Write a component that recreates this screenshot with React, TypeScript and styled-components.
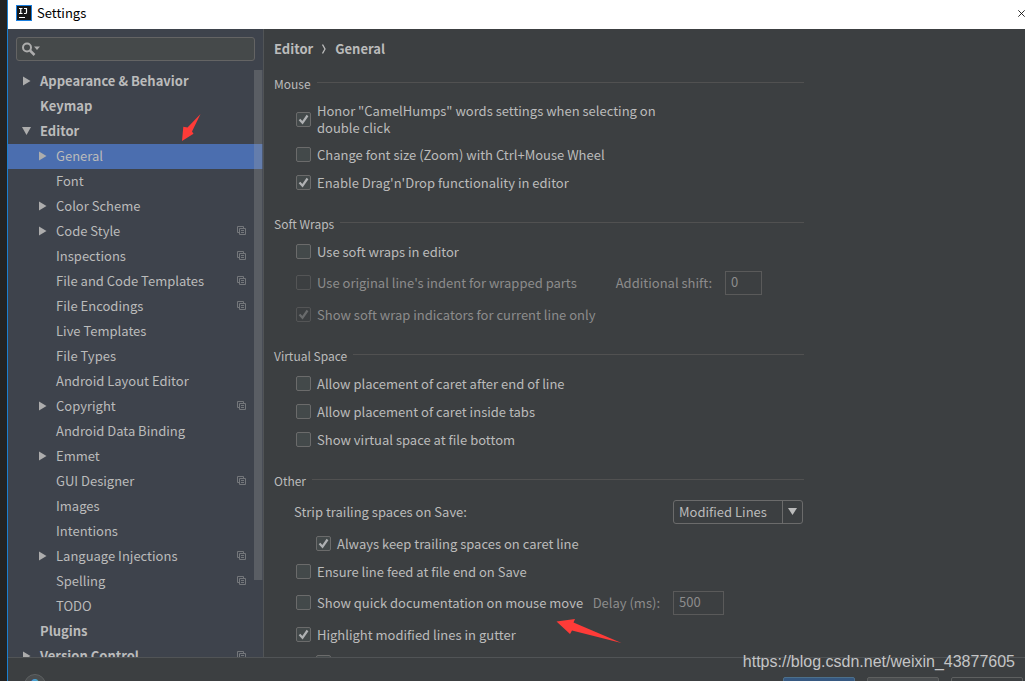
import React from "react";
import styled, { createGlobalStyle, css } from "styled-components";

const GlobalStyle = createGlobalStyle`
  *, *::before, *::after { box-sizing: border-box; }
  body { margin: 0; background: #232323; }
  body, button, input, select {
    font-family: "Noto Sans CJK SC", "Noto Sans", sans-serif;
    font-size: 13px;
  }
`;

const Desktop = styled.div`
  position: relative;
  display: flex;
  height: 100vh;
  padding-left: 7px;
  overflow: hidden;
  background: #232323;
`;

const SettingsWindow = styled.div`
  display: flex;
  flex: 1;
  flex-direction: column;
  min-width: 0;
  border-left: 1px solid #1b7fd0;
  background: #3c3f41;
  color: #bbbbbb;
`;

const TitleBar = styled.header`
  display: flex;
  flex: none;
  align-items: center;
  gap: 5px;
  height: 29px;
  padding: 0 0 3px 8px;
  overflow: hidden;
  background: #ffffff;
  color: #000000;
`;

const WindowTitle = styled.h1`
  flex: 1;
  margin: 0;
  font-size: 13px;
  font-weight: 400;
  line-height: 20px;
`;

const CloseButton = styled.button`
  display: flex;
  flex: none;
  width: 7px;
  padding: 0;
  overflow: hidden;
  border: 0;
  background: none;
`;

const Body = styled.div`
  display: flex;
  flex: 1;
  min-height: 0;
`;

const Sidebar = styled.aside`
  position: relative;
  display: flex;
  flex: none;
  flex-direction: column;
  width: 256px;
  overflow: hidden;
  border-right: 1px solid #515456;
  background: #3e434c;
`;

const SearchBox = styled.label`
  display: flex;
  flex: none;
  align-items: center;
  height: 24px;
  margin: 8px;
  padding: 0 5px;
  border: 1px solid #646464;
  border-radius: 3px;
  background: #45494a;
`;

const SearchInput = styled.input`
  flex: 1;
  min-width: 0;
  padding: 0 4px;
  border: 0;
  outline: 0;
  background: none;
  color: #bbbbbb;
`;

const Tree = styled.ul`
  margin: 0;
  padding: 0;
  list-style: none;
`;

const TreeRow = styled.li<{ $level: number; $selected?: boolean }>`
  display: flex;
  align-items: center;
  height: 25px;
  padding: 0 16px 2px ${(p) => (p.$level ? 30 : 14)}px;
  background: ${(p) => (p.$selected ? "#4b6eaf" : "transparent")};
  font-weight: ${(p) => (p.$level ? 400 : 700)};
`;

const Twisty = styled.span`
  display: flex;
  flex: none;
  width: 18px;
`;

const TreeLabel = styled.span`
  flex: 1;
  line-height: 20px;
  white-space: nowrap;
`;

const ScrollThumb = styled.div`
  position: absolute;
  top: 41px;
  right: 0;
  width: 9px;
  height: 510px;
  border-right: 1px solid rgba(62, 67, 76, 0.6);
  background: rgba(166, 166, 166, 0.28);
`;

const Page = styled.main`
  flex: 1;
  min-width: 0;
  padding: 10px;
  overflow: hidden;
`;

const Breadcrumb = styled.nav`
  display: flex;
  align-items: center;
  gap: 9px;
  margin-bottom: 15px;
  font-weight: 700;
  line-height: 20px;
`;

const Section = styled.section`
  display: flex;
  flex-direction: column;
  gap: 7px;
  max-width: 530px;
  margin-bottom: 21px;
`;

const SectionTitle = styled.h2`
  display: flex;
  gap: 6px;
  margin: 0;
  font-size: 12px;
  font-weight: 400;
  line-height: 20px;

  &::after {
    content: "";
    flex: 1;
    height: 9px;
    border-bottom: 1px solid #515151;
  }
`;

const rowHeights = { normal: 21, tall: 28, double: 36 };

const OptionRow = styled.div<{ $size?: keyof typeof rowHeights; $indent?: number }>`
  display: flex;
  flex: none;
  align-items: center;
  height: ${(p) => rowHeights[p.$size ?? "normal"]}px;
  padding-bottom: ${(p) => (p.$size === "tall" ? 1 : 0)}px;
  padding-left: ${(p) => p.$indent ?? 22}px;
`;

const disabledText = css`
  color: #8c8c8c;
`;

const OptionLabel = styled.label<{ $disabled?: boolean }>`
  display: flex;
  align-items: center;
  gap: 6px;
  max-width: 360px;
  line-height: 17px;
  ${(p) => p.$disabled && disabledText}
`;

const TickFrame = styled.span`
  display: grid;
  flex: none;
  width: 15px;
  height: 15px;

  > * {
    grid-area: 1 / 1;
  }
`;

const Tick = styled.input`
  width: 15px;
  height: 15px;
  margin: 0;
  appearance: none;
  border: 1px solid #6b6b6b;
  border-radius: 2px;
  background: #43494a;

  &:disabled {
    border-color: #545556;
    background: #3c3f41;
  }

  & + svg {
    display: none;
    pointer-events: none;
    color: #afb1b3;
  }

  &:checked + svg {
    display: block;
  }

  &:disabled + svg {
    color: #696b6c;
  }
`;

const Field = styled.label<{ $end?: number; $disabled?: boolean }>`
  display: flex;
  align-items: center;
  gap: 13px;
  margin-left: auto;
  padding-right: ${(p) => p.$end ?? 0}px;
  line-height: 17px;
  ${(p) => p.$disabled && disabledText}
`;

const NumberBox = styled.input<{ $width: number }>`
  width: ${(p) => p.$width}px;
  height: 24px;
  padding: 0 5px 2px;
  border: 1px solid #5a5a5a;
  background: #3c3f41;
  color: #8c8c8c;
`;

const SelectFrame = styled.span`
  display: grid;
  width: 130px;
  height: 24px;
  margin: 0 1px 0 auto;
  border: 1px solid #6b6b6b;
  border-radius: 3px;

  > * {
    grid-area: 1 / 1;
  }
`;

const Select = styled.select`
  padding: 0 24px 1px 5px;
  appearance: none;
  border: 0;
  background: none;
  color: #bbbbbb;
`;

const SelectArrow = styled.span`
  display: grid;
  place-items: center;
  justify-self: end;
  width: 20px;
  border-left: 1px solid #6b6b6b;
  pointer-events: none;
`;

const Footer = styled.footer`
  display: flex;
  flex: none;
  align-items: flex-start;
  gap: 12px;
  height: 24px;
  padding: 16px 2px 0 16px;
  overflow: hidden;
  border-top: 1px solid #515456;
`;

const HelpButton = styled.button`
  flex: none;
  width: 22px;
  height: 22px;
  margin-right: auto;
  padding: 0;
  border: 1px solid #5e6162;
  border-radius: 50%;
  background: #4a4d4f;
  color: #49a0cf;
  font-size: 16px;
  font-weight: 700;
  line-height: 16px;
`;

const DialogButton = styled.button<{ $kind?: "primary" | "disabled" }>`
  flex: none;
  width: 72px;
  height: 24px;
  margin-top: 3px;
  border: 1px solid ${(p) => (p.$kind === "primary" ? "#4c708c" : "#5e6060")};
  border-radius: 2px;
  background: ${(p) =>
    p.$kind === "primary" ? "#365880" : p.$kind === "disabled" ? "#4a4d4f" : "#3c3f41"};
  color: #bbbbbb;
`;

const Watermark = styled.div`
  position: absolute;
  right: 10px;
  bottom: 9px;
  color: #c4c5c6;
  font-family: "Liberation Sans", Arial, sans-serif;
  font-size: 16px;
  line-height: 20px;
`;

const Annotation = styled.svg<{ $x: number; $y: number }>`
  position: absolute;
  top: ${(p) => p.$y}px;
  left: ${(p) => p.$x}px;
  fill: #fe3b38;
  pointer-events: none;
`;

const RightArrow = () => (
  <svg width="9" height="10" viewBox="0 0 9 10" fill="#adadad" aria-hidden="true">
    <path d="M1 .5L8.500 5L1 9.500Z" />
  </svg>
);

const DownArrow = () => (
  <svg width="9" height="9" viewBox="0 0 9 9" fill="#adadad" aria-hidden="true">
    <path d="M0 1H9L4.500 9Z" />
  </svg>
);

const CopyIcon = () => (
  <svg width="10" height="10" viewBox="0 0 10 10" fill="none" stroke="#74777b" aria-hidden="true">
    <path d="M2 6.500H.5V.5H6.500V2M2.500 2.500H8.500V8.500H2.500ZM4 4.500H7M4 6.500H7" />
  </svg>
);

const SearchIcon = () => (
  <svg width="19" height="14" viewBox="0 0 19 14" fill="none" aria-hidden="true">
    <circle cx="5" cy="5.500" r="4" stroke="#adadad" strokeWidth="2" />
    <path d="M8 8.500L12.500 13" stroke="#adadad" strokeWidth="2.500" />
    <path d="M12 4.500H18L15 8Z" fill="#adadad" />
  </svg>
);

const CheckMark = () => (
  <svg width="15" height="15" viewBox="0 0 15 15" fill="none" aria-hidden="true">
    <path d="M3.500 7.500L6.500 10.700L11.500 3.500" stroke="currentColor" strokeWidth="2.200" />
  </svg>
);

const AppIcon = () => (
  <svg width="16" height="16" viewBox="0 0 16 16" fill="none" aria-hidden="true">
    <path d="M0 0H16V16H0Z" fill="#1a7fe0" />
    <path d="M1 1H15V15H1Z" fill="#161616" />
    <path d="M3 3.500H6.500M4.750 3.500V8.500M3 8.500H6.500M8 3.500H11M10.500 3.500V7.500Q10.500 8.500 9.500 8.500H8M3 12.500H9" stroke="#ffffff" strokeWidth="1.200" />
  </svg>
);

type Node = {
  name: string;
  level: number;
  state?: "open" | "closed";
  copy?: boolean;
  selected?: boolean;
};

const nodes: Node[] = [
  { name: "Appearance & Behavior", level: 0, state: "closed" },
  { name: "Keymap", level: 0 },
  { name: "Editor", level: 0, state: "open" },
  { name: "General", level: 1, state: "closed", selected: true },
  { name: "Font", level: 1 },
  { name: "Color Scheme", level: 1, state: "closed" },
  { name: "Code Style", level: 1, state: "closed", copy: true },
  { name: "Inspections", level: 1, copy: true },
  { name: "File and Code Templates", level: 1, copy: true },
  { name: "File Encodings", level: 1, copy: true },
  { name: "Live Templates", level: 1 },
  { name: "File Types", level: 1 },
  { name: "Android Layout Editor", level: 1 },
  { name: "Copyright", level: 1, state: "closed", copy: true },
  { name: "Android Data Binding", level: 1 },
  { name: "Emmet", level: 1, state: "closed" },
  { name: "GUI Designer", level: 1, copy: true },
  { name: "Images", level: 1 },
  { name: "Intentions", level: 1 },
  { name: "Language Injections", level: 1, state: "closed", copy: true },
  { name: "Spelling", level: 1, copy: true },
  { name: "TODO", level: 1 },
  { name: "Plugins", level: 0 },
  { name: "Version Control", level: 0, state: "closed", copy: true },
];

type OptionProps = {
  label: React.ReactNode;
  checked?: boolean;
  disabled?: boolean;
  size?: keyof typeof rowHeights;
  indent?: number;
  children?: React.ReactNode;
};

const Option = ({ label, checked, disabled, size, indent, children }: OptionProps) => (
  <OptionRow $size={size} $indent={indent}>
    <OptionLabel $disabled={disabled}>
      <TickFrame>
        <Tick type="checkbox" defaultChecked={checked} disabled={disabled} />
        <CheckMark />
      </TickFrame>
      <span>{label}</span>
    </OptionLabel>
    {children}
  </OptionRow>
);

export default function App() {
  return (
    <Desktop>
      <GlobalStyle />
      <SettingsWindow>
        <TitleBar>
          <AppIcon />
          <WindowTitle>Settings</WindowTitle>
          <CloseButton aria-label="Close">
            <svg width="11" height="11" viewBox="0 0 11 11" fill="none" stroke="#000000">
              <path d="M.5 .5L10.500 10.500M10.500 .5L.5 10.500" strokeWidth="1.300" />
            </svg>
          </CloseButton>
        </TitleBar>
        <Body>
          <Sidebar>
            <SearchBox>
              <SearchIcon />
              <SearchInput type="text" aria-label="Search settings" />
            </SearchBox>
            <Tree>
              {nodes.map((n) => (
                <TreeRow key={n.name} $level={n.level} $selected={n.selected}>
                  <Twisty>
                    {n.state === "closed" && <RightArrow />}
                    {n.state === "open" && <DownArrow />}
                  </Twisty>
                  <TreeLabel>{n.name}</TreeLabel>
                  {n.copy && <CopyIcon />}
                </TreeRow>
              ))}
            </Tree>
            <ScrollThumb />
          </Sidebar>
          <Page>
            <Breadcrumb aria-label="Location">
              <span>Editor</span>
              <svg width="4" height="10" viewBox="0 0 4 10" fill="none" stroke="#bbbbbb" aria-hidden="true">
                <path d="M.5 .5L3 5L.5 9.500" strokeWidth="1.300" />
              </svg>
              <span>General</span>
            </Breadcrumb>
            <Section>
              <SectionTitle>Mouse</SectionTitle>
              <Option
                size="double"
                checked
                label={'Honor "CamelHumps" words settings when selecting on double click'}
              />
              <Option label="Change font size (Zoom) with Ctrl+Mouse Wheel" />
              <Option checked label="Enable Drag'n'Drop functionality in editor" />
            </Section>
            <Section>
              <SectionTitle>Soft Wraps</SectionTitle>
              <Option label="Use soft wraps in editor" />
              <Option size="tall" disabled label="Use original line's indent for wrapped parts">
                <Field $end={42} $disabled>
                  Additional shift:
                  <NumberBox $width={37} type="text" defaultValue="0" disabled />
                </Field>
              </Option>
              <Option checked disabled label="Show soft wrap indicators for current line only" />
            </Section>
            <Section>
              <SectionTitle>Virtual Space</SectionTitle>
              <Option label="Allow placement of caret after end of line" />
              <Option label="Allow placement of caret inside tabs" />
              <Option label="Show virtual space at file bottom" />
            </Section>
            <Section>
              <SectionTitle>Other</SectionTitle>
              <OptionRow $size="tall" $indent={20}>
                <label htmlFor="strip-spaces">Strip trailing spaces on Save:</label>
                <SelectFrame>
                  <Select id="strip-spaces" defaultValue="modified">
                    <option value="modified">Modified Lines</option>
                    <option value="all">All</option>
                    <option value="none">None</option>
                  </Select>
                  <SelectArrow>
                    <svg width="9" height="7" viewBox="0 0 9 7" fill="#bbbbbb" aria-hidden="true">
                      <path d="M0 0H9L4.500 7Z" />
                    </svg>
                  </SelectArrow>
                </SelectFrame>
              </OptionRow>
              <Option indent={42} checked label="Always keep trailing spaces on caret line" />
              <Option label="Ensure line feed at file end on Save" />
              <Option size="tall" label="Show quick documentation on mouse move">
                <Field $end={80} $disabled>
                  Delay (ms):
                  <NumberBox $width={51} type="text" defaultValue="500" disabled />
                </Field>
              </Option>
              <Option checked label="Highlight modified lines in gutter" />
              <Option indent={42} label="" />
            </Section>
          </Page>
        </Body>
        <Footer>
          <HelpButton aria-label="Help">?</HelpButton>
          <DialogButton $kind="primary" aria-label="OK" />
          <DialogButton $kind="disabled" aria-label="Cancel" />
          <DialogButton aria-label="Apply" />
        </Footer>
      </SettingsWindow>
      <Annotation $x={181} $y={113} width="21" height="29" viewBox="0 0 21 29" aria-hidden="true">
        <path d="M19.500 1L6.500 14.500L2.300 13.800L1 28L12.500 20.800L11 18.500Z" />
      </Annotation>
      <Annotation $x={556} $y={618} width="67" height="26" viewBox="0 0 67 26" aria-hidden="true">
        <path d="M.5 3.500L19 1L17.500 4.500L65.500 25L16 12.500L14 16Z" />
      </Annotation>
      <Watermark>https://blog.csdn.net/weixin_43877605</Watermark>
    </Desktop>
  );
}
